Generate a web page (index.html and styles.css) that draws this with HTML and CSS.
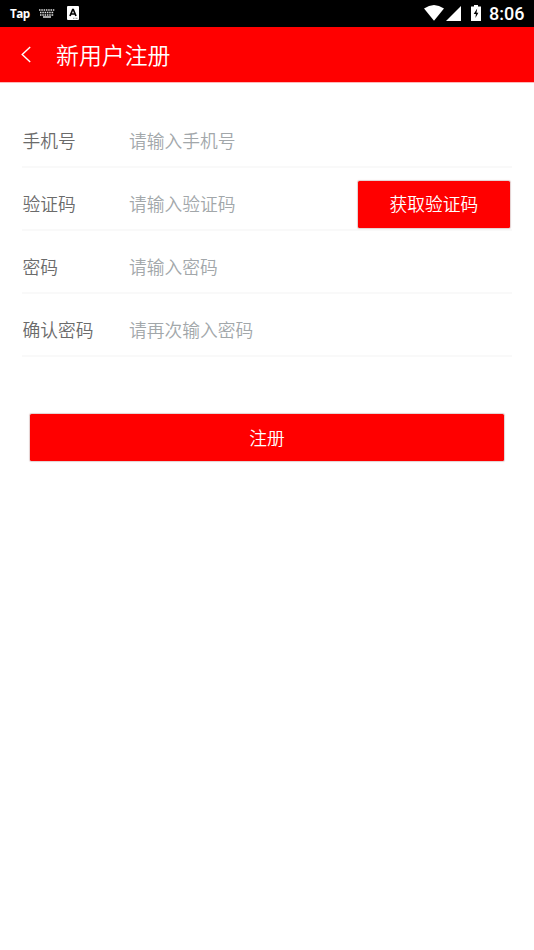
FILE: index.html
```html
<!DOCTYPE html>
<html lang="zh-CN">
<head>
<meta charset="utf-8">
<title>新用户注册</title>
<link rel="stylesheet" href="styles.css">
</head>
<body>
<div class="status">
  <span class="tap">Tap</span>
  <svg class="keyboard" width="16" height="9" viewBox="0 0 16 9" fill="none" stroke="#ddd" stroke-width="1.5"><path d="M0 1h16M1 3.5h14M1 6h14" stroke-dasharray="1.5 .8"/><path d="M4 8h8"/></svg>
  <svg class="app" width="12" height="14" viewBox="0 0 12 14"><rect width="12" height="14" rx="1" fill="#fff"/><path d="M3 10l2.7-6.5h.6L9 10M4.1 8h3.8" fill="none" stroke="#000" stroke-width="1.7"/><path d="M6 12.3h5" stroke="#777" stroke-width=".8" stroke-dasharray="1 .5"/></svg>
  <span class="space"></span>
  <svg class="wifi" width="20" height="16" viewBox="0 0 20 16"><path d="M0 3.5Q10-3.5 20 3.5L10 15.8Z" fill="#fff"/></svg>
  <svg class="signal" width="15" height="15" viewBox="0 0 15 15"><path d="M15 0v15H0Z" fill="#fff"/></svg>
  <svg class="battery" width="10" height="16" viewBox="0 0 10 16"><path d="M3 0h4v1.6h3V16H0V1.6h3Z" fill="#fff"/><path d="M6.2 3.5L2.7 9h2.2L4.4 13l3-5.3H5.5Z" fill="#000"/></svg>
  <span class="clock">8:06</span>
</div>
<header class="header">
  <svg class="back" width="10" height="17" viewBox="0 0 10 17"><path d="M9.2.9L1.2 8.5l8 7.6" fill="none" stroke="#fff" stroke-width="1.4"/></svg>
  <h1 class="title">新用户注册</h1>
</header>
<form class="form">
  <label class="row"><span class="label">手机号</span><input class="input" type="text" placeholder="请输入手机号"></label>
  <div class="row"><span class="label">验证码</span><input class="input" type="text" placeholder="请输入验证码"><button class="button code" type="button">获取验证码</button></div>
  <label class="row"><span class="label">密码</span><input class="input" type="password" placeholder="请输入密码"></label>
  <label class="row"><span class="label">确认密码</span><input class="input" type="password" placeholder="请再次输入密码"></label>
  <button class="button submit" type="button">注册</button>
</form>
</body>
</html>
```
FILE: styles.css
```css
* { box-sizing: border-box; }
body { margin: 0; min-height: 950px; background: #fff; font-family: "Noto Sans CJK SC", sans-serif; font-weight: 350; }
.status { display: flex; align-items: center; height: 27px; padding: 0 9px 1px 10px; background: #000; color: #fff; }
.status svg { display: block; flex: none; }
.tap { width: 29px; font: 700 11.7px/26px "Open Sans", sans-serif; letter-spacing: -.5px; }
.app { margin-left: 12px; }
.space { flex: 1; }
.signal { margin-left: 2px; }
.battery { margin-left: 10px; }
.clock { width: 36px; margin-left: 8px; padding-top: 1px; font: 500 18px/28px Roboto, sans-serif; white-space: nowrap; }
.header { display: flex; align-items: center; height: 56px; padding-left: 21px; border-bottom: 1px solid #ffb8b8; background: #f00; color: #fff; }
.back { margin-bottom: 1px; }
.title { margin: 0 0 2px 25px; font-size: 22.9px; line-height: 34px; font-weight: 350; }
.form { padding: 22px 22px 0; }
.row { display: flex; align-items: center; height: 63px; padding-top: 9px; border-bottom: 2px solid #f9f9f9; }
.label { flex: none; width: 107px; padding-left: .5px; color: #6b6b6b; font-size: 17.75px; line-height: 26px; }
.input { flex: 1; min-width: 0; height: 30px; padding: 0; border: 0; outline: 0; background: none; color: #6b6b6b; font: 350 17.75px/26px "Noto Sans CJK SC", sans-serif; }
.input::placeholder { color: #a2a7aa; opacity: 1; }
.button { display: block; height: 47px; padding: 0 0 1px; border: 0; border-radius: 1.5px; background: #f00; box-shadow: 0 0 1px 1px #e3d0d0; color: #fff; font: 350 17.75px/26px "Noto Sans CJK SC", sans-serif; }
.code { flex: none; width: 152px; margin: 3px 2px 0 0; padding-bottom: 3px; }
.submit { width: 474px; margin: 57px 0 0 8px; }
```
